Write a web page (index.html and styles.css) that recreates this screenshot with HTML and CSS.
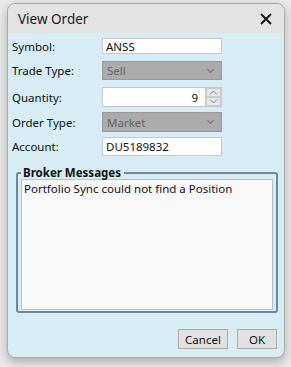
FILE: index.html
```html
<!DOCTYPE html>
<html lang="en">
<head>
    <meta charset="UTF-8">
    <title>View Order</title>
    <link rel="stylesheet" href="styles.css">
</head>
<body>
   <div class="window">
     <div class="titlebar">
	     <span class="title">View Order</span>
	     <svg class="close" width="12" height="12" viewBox="0 0 12 12">
		     <path d="M1 1 L11 11 M11 1 L1 11" stroke="#111" stroke-width="1.8" fill="none"/>
	     </svg>
     </div>
     <div class="content">
	     <div class="form">
		     <div class="row r1">
			     <span class="label">Symbol:</span>
			     <div class="input">ANSS</div>
		     </div>
		     <div class="row r2">
			     <span class="label">Trade Type:</span>
			     <div class="select">Sell<span class="chev"></span></div>
		     </div>
		     <div class="row r3">
			     <span class="label">Quantity:</span>
			     <div class="spin">
				     <div class="input num">9</div>
				     <div class="spinbtns">
					     <div class="sb"><svg width="9" height="5" viewBox="0 0 9 5"><path d="M1 4.5 L4.5 1 L8 4.5" stroke="#8a8a8a" fill="none"/></svg></div>
					     <div class="sb"><svg width="9" height="5" viewBox="0 0 9 5"><path d="M1 0.5 L4.5 4 L8 0.5" stroke="#8a8a8a" fill="none"/></svg></div>
				     </div>
			     </div>
		     </div>
		     <div class="row r4">
			     <span class="label">Order Type:</span>
			     <div class="select">Market<span class="chev"></span></div>
		     </div>
		     <div class="row r5">
			     <span class="label">Account:</span>
			     <div class="input">DU5189832</div>
		     </div>
	     </div>
	     <fieldset class="group">
		     <legend>Broker Messages</legend>
		     <div class="messages">Portfolio Sync could not find a Position</div>
	     </fieldset>
	     <div class="buttons">
		     <div class="btn cancel">Cancel</div>
		     <div class="btn ok">OK</div>
	     </div>
     </div>
   </div>
</body>
</html>
```

FILE: styles.css
```css
    html, body {
	margin: 0;
	height: 100%;
    }
    body {
	background-color: #e8e8e8;
	padding: 3px 0 0 7px;
	box-sizing: border-box;
	font-family: "Noto Sans", "Open Sans", sans-serif;
	font-size: 11.5px;
	color: #111;
    }
    .window {
	width: 278px;
	height: 355px;
	box-sizing: border-box;
	border: 1px solid #a9a9a9;
	border-radius: 8px;
	overflow: hidden;
	background-color: #d7ecf4;
	box-shadow: 0 4px 10px rgba(0,0,0,0.25);
	display: flex;
	flex-direction: column;
    }
    .titlebar {
	height: 29px;
	background-color: #e3e3e3;
	display: flex;
	align-items: center;
	justify-content: space-between;
	padding: 0 12px 0 10px;
	flex-shrink: 0;
    }
    .title {
	font-size: 13.5px;
	color: #1a1a1a;
    }
    .content {
	flex: 1;
	display: flex;
	flex-direction: column;
    }
    .form {
	display: flex;
	flex-direction: column;
	padding-left: 4px;
    }
    .row {
	display: flex;
	align-items: center;
    }
    .label {
	width: 90px;
    }
    .r1 { margin-top: 5px; height: 16px; }
    .r2 { margin-top: 7px; height: 19px; }
    .r3 { margin-top: 7px; height: 20px; }
    .r4 { margin-top: 5px; height: 20px; }
    .r5 { margin-top: 5px; height: 19px; }
    .input {
	width: 120px;
	height: 100%;
	box-sizing: border-box;
	background-color: #fff;
	border: 1px solid #c8c8c8;
	padding: 0 3px;
	display: flex;
	align-items: center;
    }
    .select {
	width: 120px;
	height: 100%;
	box-sizing: border-box;
	background-color: #ababab;
	border: 1px solid #999;
	color: #666;
	padding: 0 4px;
	display: flex;
	align-items: center;
	justify-content: space-between;
    }
    .chev {
	width: 4px;
	height: 4px;
	border-right: 1px solid #777;
	border-bottom: 1px solid #777;
	transform: rotate(45deg);
	margin: 0 4px 3px 0;
    }
    .spin {
	display: flex;
	width: 120px;
	height: 100%;
    }
    .num {
	width: 104px;
	justify-content: flex-end;
	padding-right: 7px;
    }
    .spinbtns {
	width: 16px;
	display: flex;
	flex-direction: column;
	border: 1px solid #c8c8c8;
	border-left: none;
	box-sizing: border-box;
	background-color: #f0f0f0;
    }
    .sb {
	flex: 1;
	display: flex;
	align-items: center;
	justify-content: center;
	background-color: #e6e6e6;
	border: 1px solid #cdcdcd;
    }
    .group {
	margin: 10px 6px 0 8px;
	padding: 0 3px 1px 3px;
	border: 2px solid #6e879a;
	border-radius: 3px;
    }
    .group legend {
	font-weight: bold;
	padding: 0 3px 0 2px;
	line-height: 14px;
	color: #111;
    }
    .messages {
	height: 127px;
	background-color: #f8f8f8;
	border: 1px solid #b9c3ca;
	padding: 1px 2px;
	margin-top: -1px;
    }
    .buttons {
	display: flex;
	justify-content: flex-end;
	gap: 9px;
	margin: 16px 7px 0 0;
    }
    .btn {
	height: 20px;
	box-sizing: border-box;
	background-color: #e1e1e1;
	border: 1px solid #adadad;
	display: flex;
	align-items: center;
	justify-content: center;
    }
    .cancel { width: 50px; }
    .ok { width: 40px; }
```
